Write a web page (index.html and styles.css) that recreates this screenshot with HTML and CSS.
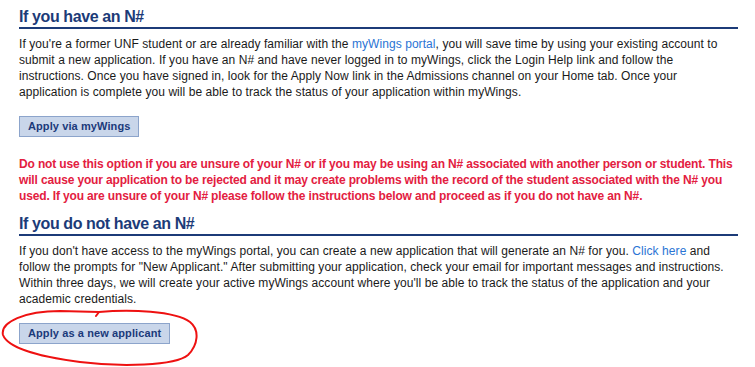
FILE: index.html
```html
<!DOCTYPE html>
<html>
<head>
<meta charset="utf-8">
<link rel="stylesheet" href="styles.css">
</head>
<body>
<div class="page">
  <h2 class="heading first">If you have an N#</h2>
  <p class="text">If you're a former UNF student or are already familiar with the <a class="link" href="#">myWings portal</a>, you will save time by using your existing account to submit a new application. If you have an N# and have never logged in to myWings, click the Login Help link and follow the instructions. Once you have signed in, look for the Apply Now link in the Admissions channel on your Home tab. Once your application is complete you will be able to track the status of your application within myWings.</p>
  <div class="btn-row"><button class="btn">Apply via myWings</button></div>
  <p class="warning">Do not use this option if you are unsure of your N# or if you may be using an N# associated with another person or student. This will cause your application to be rejected and it may create problems with the record of the student associated with the N# you used. If you are unsure of your N# please follow the instructions below and proceed as if you do not have an N#.</p>
  <h2 class="heading second">If you do not have an N#</h2>
  <p class="text">If you don't have access to the myWings portal, you can create a new application that will generate an N# for you. <a class="link" href="#">Click here</a> and follow the prompts for "New Applicant." After submitting your application, check your email for important messages and instructions. Within three days, we will create your active myWings account where you'll be able to track the status of the application and your academic credentials.</p>
  <div class="btn-row second-btn"><button class="btn">Apply as a new applicant</button></div>
</div>
<svg class="circle" width="755" height="367" viewBox="0 0 755 367">
  <path d="M 96 316 L 99 312 C 130 309, 175 311, 190 322 C 200 330, 198 345, 188 355 C 175 366, 120 367, 80 362 C 40 357, 8 348, 3 335 C 0 322, 25 311, 60 311 L 99 312" fill="none" stroke="#ee1111" stroke-width="2" stroke-linecap="round" stroke-linejoin="round"/>
</svg>
</body>
</html>
```
FILE: styles.css
```css
html, body {
  margin: 0;
  padding: 0;
  background: #ffffff;
}
body {
  font-family: "Liberation Sans", Arial, sans-serif;
  font-size: 12px;
  color: #1a1a1a;
  position: relative;
  width: 755px;
  height: 367px;
  overflow: hidden;
}
.page {
  padding: 0 17px 0 19px;
}
.heading {
  margin: 0;
  font-size: 16px;
  line-height: 20px;
  font-weight: bold;
  letter-spacing: -0.4px;
  color: #1c3b78;
  border-bottom: 2px solid #1c3b78;
}
.heading.first {
  padding-top: 7px;
}
.heading.second {
  margin-top: 10px;
}
.text {
  margin: 7px 0 0 0;
  line-height: 16px;
  letter-spacing: 0.07px;
}
.link {
  color: #2a74d4;
  text-decoration: none;
}
.btn-row {
  margin-top: 16px;
  display: flex;
}
.second-btn {
  margin-top: 16px;
}
.btn {
  font-family: "Liberation Sans", Arial, sans-serif;
  font-size: 11px;
  font-weight: bold;
  letter-spacing: 0.1px;
  color: #1b3a7a;
  background: #c9d6ea;
  border: 1px solid #8ca4cb;
  padding: 2px 8px;
  line-height: 15px;
  margin: 0;
}
.warning {
  margin: 19px 0 0 0;
  line-height: 16px;
  font-weight: bold;
  letter-spacing: -0.15px;
  color: #e3203f;
}
.circle {
  position: absolute;
  left: 0;
  top: 0;
  pointer-events: none;
}
```
